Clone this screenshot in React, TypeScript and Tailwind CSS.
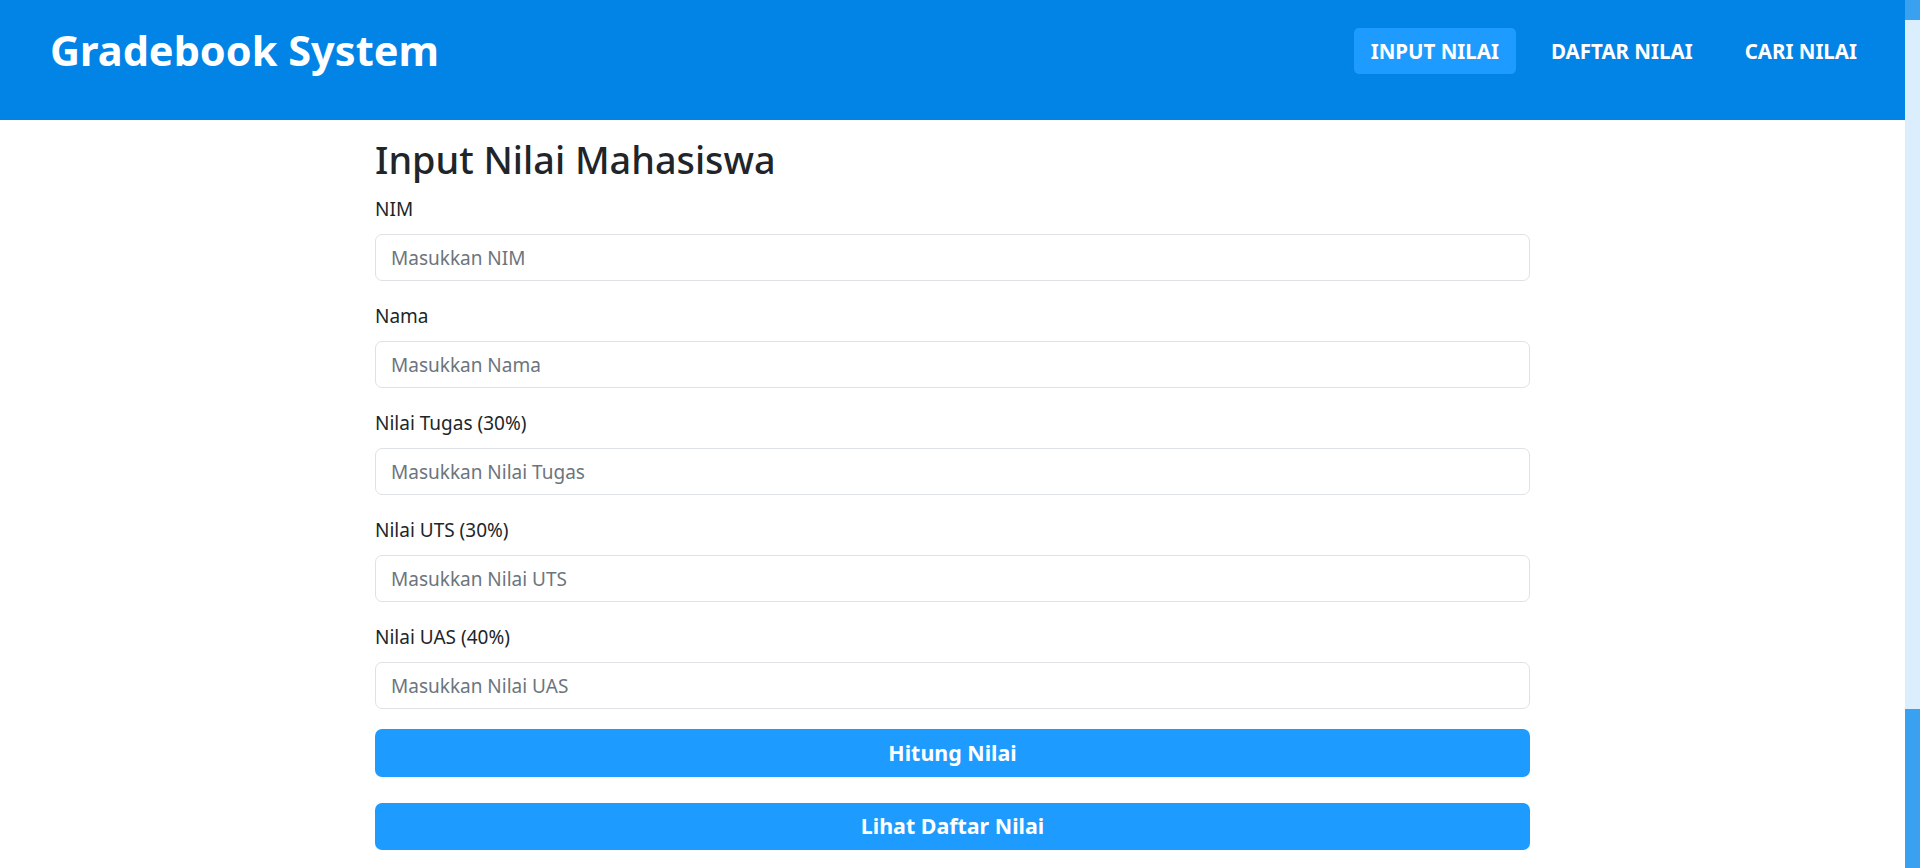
import React from "react";

const fields = [
  { label: "NIM", placeholder: "Masukkan NIM" },
  { label: "Nama", placeholder: "Masukkan Nama" },
  { label: "Nilai Tugas (30%)", placeholder: "Masukkan Nilai Tugas" },
  { label: "Nilai UTS (30%)", placeholder: "Masukkan Nilai UTS" },
  { label: "Nilai UAS (40%)", placeholder: "Masukkan Nilai UAS" },
];

export default function App() {
  return (
    <div className="flex h-screen bg-white font-['Noto_Sans',sans-serif] text-[#212529]">
      <div className="flex-1 flex flex-col">
        <header className="h-[120px] bg-[#0283e6] flex items-center justify-between pl-[50px] pr-[31px] pb-[18px]">
          <h1 className="text-[41.5px] font-bold text-white leading-none">Gradebook System</h1>
          <nav className="flex items-center gap-[18px]">
            <a className="h-[46px] flex items-center px-[17px] rounded-[5px] bg-[#1e9bff] text-white font-bold text-[20.5px] uppercase">
              Input Nilai
            </a>
            <a className="h-[46px] flex items-center px-[17px] text-white font-bold text-[20.5px] uppercase">
              Daftar Nilai
            </a>
            <a className="h-[46px] flex items-center px-[17px] text-white font-bold text-[20.5px] uppercase">
              Cari Nilai
            </a>
          </nav>
        </header>

        <main className="w-[1155px] mx-auto pt-[16px]">
          <h2 className="text-[37.8px] font-medium leading-[48px] mb-[10px]">Input Nilai Mahasiswa</h2>
          <form className="flex flex-col">
            {fields.map((f) => (
              <div key={f.label} className="mb-[20px]">
                <label className="block text-[19px] leading-[30px] mb-[10px]">{f.label}</label>
                <input
                  type="text"
                  placeholder={f.placeholder}
                  className="w-full h-[47px] px-[15px] text-[19px] border border-[#dee2e6] rounded-[7px] placeholder:text-[#6c757d] outline-none"
                />
              </div>
            ))}
            <button
              type="button"
              className="h-[47.5px] rounded-[7px] bg-[#1e9bff] text-white font-bold text-[21.4px]"
            >
              Hitung Nilai
            </button>
            <button
              type="button"
              className="mt-[26px] h-[47.5px] rounded-[7px] bg-[#1e9bff] text-white font-bold text-[21.4px]"
            >
              Lihat Daftar Nilai
            </button>
          </form>
        </main>
      </div>

      <div className="w-[15px] flex flex-col">
        <div className="h-[20px] bg-[#3aa0f0]"></div>
        <div className="flex-1 bg-[#dbeefe]"></div>
        <div className="h-[159px] bg-[#3aa0f0]"></div>
      </div>
    </div>
  );
}
